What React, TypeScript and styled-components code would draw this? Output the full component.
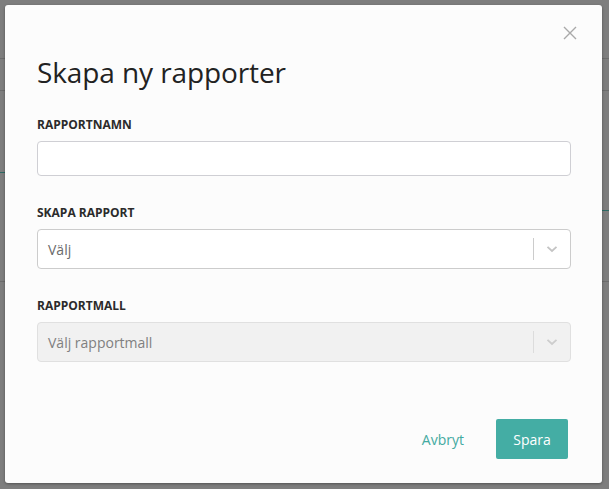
import React from "react";
import styled, { createGlobalStyle } from "styled-components";

const GlobalStyle = createGlobalStyle`
  html, body {
    margin: 0;
    padding: 0;
    height: 100%;
    background: #7e7e7e;
    font-family: "Open Sans", "Liberation Sans", sans-serif;
  }
  #root { height: 100%; }
`;

// dimmed page that sits behind the dialog
const Backdrop = styled.div`
  position: fixed;
  inset: 0;
  background: #7e7e7e;
  overflow: hidden;
`;

const Rule = styled.div<{ $top: number; $color: string; $left?: number; $right?: number }>`
  position: absolute;
  top: ${(p) => p.$top}px;
  left: ${(p) => p.$left ?? 0}px;
  right: ${(p) => p.$right ?? 0}px;
  height: 1px;
  background: ${(p) => p.$color};
`;

const Overlay = styled.div`
  position: fixed;
  inset: 0;
  display: flex;
  align-items: flex-start;
  justify-content: center;
  padding: 5px 7px 6px 5px;
`;

const Dialog = styled.div`
  position: relative;
  width: 597px;
  height: 478px;
  box-sizing: border-box;
  background: #fcfcfc;
  border-radius: 3px;
  box-shadow: 0 1px 3px rgba(0, 0, 0, 0.35);
  padding: 47px 31px 24px 32px;
  display: flex;
  flex-direction: column;
`;

const Close = styled.button`
  position: absolute;
  top: 21px;
  right: 25px;
  width: 14px;
  height: 14px;
  padding: 0;
  border: none;
  background: none;
  cursor: pointer;
  display: flex;
`;

const Title = styled.h2`
  margin: 0 0 25px;
  font-size: 28px;
  line-height: 40px;
  font-weight: 400;
  color: #222;
  letter-spacing: -0.1px;
`;

const Field = styled.div`
  display: flex;
  flex-direction: column;
  margin-bottom: 29px;
`;

const Label = styled.label`
  font-size: 12px;
  font-weight: 700;
  color: #2b2b2b;
  line-height: 16px;
  margin-bottom: 8px;
`;

const TextInput = styled.input`
  height: 35px;
  box-sizing: border-box;
  border: 1px solid #cfcfd4;
  border-radius: 4px;
  background: #fff;
  outline: none;
  font: inherit;
  font-size: 14px;
  padding: 0 10px;
`;

const Select = styled.div<{ $disabled?: boolean }>`
  height: 40px;
  box-sizing: border-box;
  border: 1px solid ${(p) => (p.$disabled ? "#e0e0e0" : "#cccccc")};
  border-radius: 4px;
  background: ${(p) => (p.$disabled ? "#f1f1f1" : "#fff")};
  display: flex;
  align-items: center;
`;

const Value = styled.span<{ $disabled?: boolean }>`
  flex: 1;
  padding-left: 10px;
  font-size: 14px;
  color: ${(p) => (p.$disabled ? "#808080" : "#6b6b6b")};
`;

const Divider = styled.span<{ $disabled?: boolean }>`
  width: 1px;
  align-self: stretch;
  margin: 8px 0;
  background: ${(p) => (p.$disabled ? "#dcdcdc" : "#cccccc")};
`;

const Chevron = styled.span`
  width: 36px;
  display: flex;
  align-items: center;
  justify-content: center;
`;

const Footer = styled.div`
  margin-top: auto;
  display: flex;
  justify-content: flex-end;
  align-items: center;
  gap: 32px;
  padding-right: 3px;
`;

const TextButton = styled.button`
  border: none;
  background: none;
  font: inherit;
  font-size: 14px;
  color: #43aaa1;
  cursor: pointer;
  padding: 0;
`;

const PrimaryButton = styled.button`
  width: 72px;
  height: 40px;
  border: none;
  border-radius: 2px;
  background: #44ada4;
  color: #fff;
  font: inherit;
  font-size: 14px;
  cursor: pointer;
`;

function ChevronIcon({ color }: { color: string }) {
  return (
    <svg width="12" height="8" viewBox="0 0 12 8">
      <path d="M1.5 1.8 L6 6 L10.5 1.8" fill="none" stroke={color} strokeWidth="1.8" />
    </svg>
  );
}

export default function App() {
  return (
    <>
      <GlobalStyle />
      <Backdrop>
        <Rule $top={58} $color="#6c6c6c" />
        <Rule $top={90} $color="#6c6c6c" />
        <Rule $top={172} $color="#2d6a64" $right={300} />
        <Rule $top={210} $color="#2d6a64" $left={300} />
        <Rule $top={281} $color="#6c6c6c" />
      </Backdrop>
      <Overlay>
        <Dialog>
          <Close aria-label="Stäng">
            <svg width="14" height="14" viewBox="0 0 14 14">
              <path d="M1 1 L13 13 M13 1 L1 13" stroke="#a9a9a9" strokeWidth="1.4" />
            </svg>
          </Close>
          <Title>Skapa ny rapporter</Title>
          <Field>
            <Label>RAPPORTNAMN</Label>
            <TextInput type="text" />
          </Field>
          <Field>
            <Label>SKAPA RAPPORT</Label>
            <Select>
              <Value>Välj</Value>
              <Divider />
              <Chevron>
                <ChevronIcon color="#c4c4c4" />
              </Chevron>
            </Select>
          </Field>
          <Field>
            <Label>RAPPORTMALL</Label>
            <Select $disabled>
              <Value $disabled>Välj rapportmall</Value>
              <Divider $disabled />
              <Chevron>
                <ChevronIcon color="#cdcdcd" />
              </Chevron>
            </Select>
          </Field>
          <Footer>
            <TextButton>Avbryt</TextButton>
            <PrimaryButton>Spara</PrimaryButton>
          </Footer>
        </Dialog>
      </Overlay>
    </>
  );
}
